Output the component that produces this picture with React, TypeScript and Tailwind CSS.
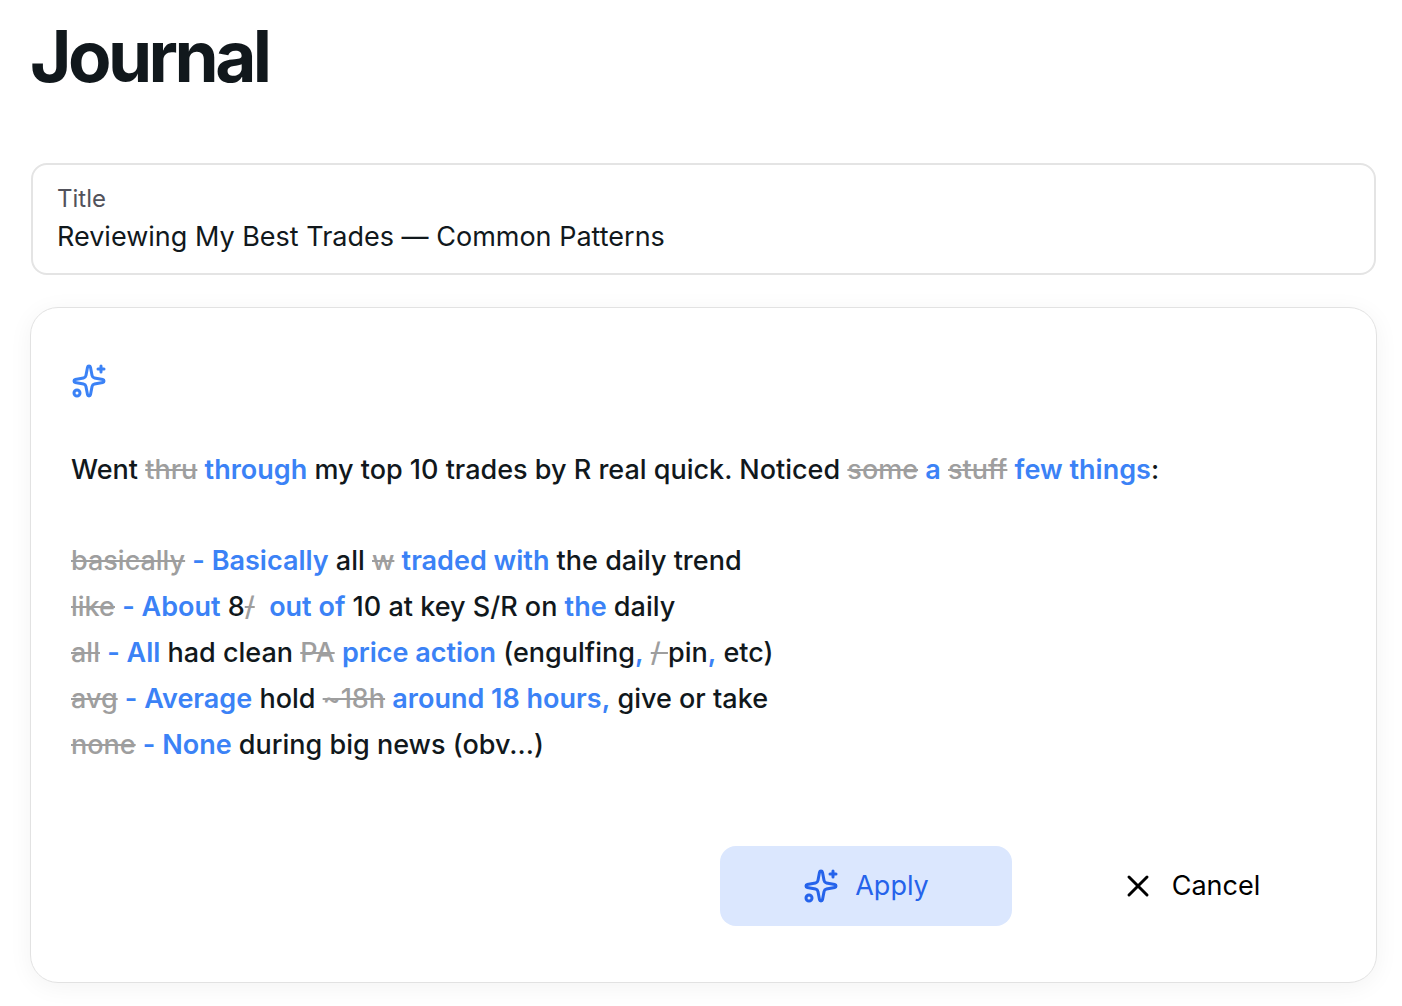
import { Sparkles, X } from "lucide-react";

type Part = { kind: "same" | "old" | "new"; text: string };

const same = (text: string): Part => ({ kind: "same", text });
const old = (text: string): Part => ({ kind: "old", text });
const add = (text: string): Part => ({ kind: "new", text });

const intro: Part[] = [
  same("Went "), old("thru"), same(" "), add("through"),
  same(" my top 10 trades by R real quick. Noticed "),
  old("some"), same(" "), add("a"), same(" "), old("stuff"), same(" "), add("few things"), same(":"),
];

const lines: Part[][] = [
  [old("basically"), same(" "), add("- Basically"), same(" all "), old("w"), same(" "), add("traded with"), same(" the daily trend")],
  [old("like"), same(" "), add("- About"), same(" 8"), old("/"), same("  "), add("out of"), same(" 10 at key S/R on "), add("the"), same(" daily")],
  [old("all"), same(" "), add("- All"), same(" had clean "), old("PA"), same(" "), add("price action"), same(" (engulfing"), add(","), same(" "), old("/ "), same("pin"), add(","), same(" etc)")],
  [old("avg"), same(" "), add("- Average"), same(" hold "), old("~18h"), same(" "), add("around 18 hours,"), same(" give or take")],
  [old("none"), same(" "), add("- None"), same(" during big news (obv...)")],
];

function DiffLine({ parts }: { parts: Part[] }) {
  return (
    <p className="whitespace-pre-wrap">
      {parts.map((part, i) => {
        if (part.kind === "old") {
          return <del key={i} className="text-[#9e9e9e] line-through decoration-2">{part.text}</del>;
        }
        if (part.kind === "new") {
          return <ins key={i} className="font-semibold text-[#3b82f6] no-underline">{part.text}</ins>;
        }
        return <span key={i}>{part.text}</span>;
      })}
    </p>
  );
}

export default function App() {
  return (
    <main className="min-h-screen bg-white pt-5 pr-[25px] pb-6 pl-[30px] font-['Inter',sans-serif] text-[27px] text-[#11181c] [font-feature-settings:'calt'_0]">
      <h1 className="text-[71px] leading-[72px] font-bold tracking-tighter">Journal</h1>

      <div className="mx-px mt-[71px] rounded-2xl border-2 border-[#e4e4e4] px-6 py-4">
        <label htmlFor="title" className="block text-2xl leading-9 text-[#52525b]">Title</label>
        <input
          id="title"
          type="text"
          defaultValue="Reviewing My Best Trades — Common Patterns"
          className="block h-10 w-full bg-transparent outline-none"
        />
      </div>

      <section className="mt-8 rounded-[28px] border border-[#e2e2e2] px-10 pt-[55px] pb-14 shadow-[0_4px_24px_rgba(0,0,0,0.05)]">
        <Sparkles className="size-9 text-[#3b82f6]" />

        <div className="mt-12 leading-[46px] font-[450]">
          <DiffLine parts={intro} />
          <div className="mt-[45px]">
            {lines.map((parts, i) => (
              <DiffLine key={i} parts={parts} />
            ))}
          </div>
        </div>

        <div className="mt-[78px] flex flex-wrap justify-end gap-8">
          <button className="flex h-20 w-[292px] items-center justify-center gap-4 rounded-2xl bg-[#dbe7fe] text-[#2563eb]">
            <Sparkles className="size-9" />
            Apply
          </button>
          <button className="flex h-20 w-[292px] items-center justify-center gap-4 rounded-2xl text-black">
            <X className="size-9" />
            Cancel
          </button>
        </div>
      </section>
    </main>
  );
}
